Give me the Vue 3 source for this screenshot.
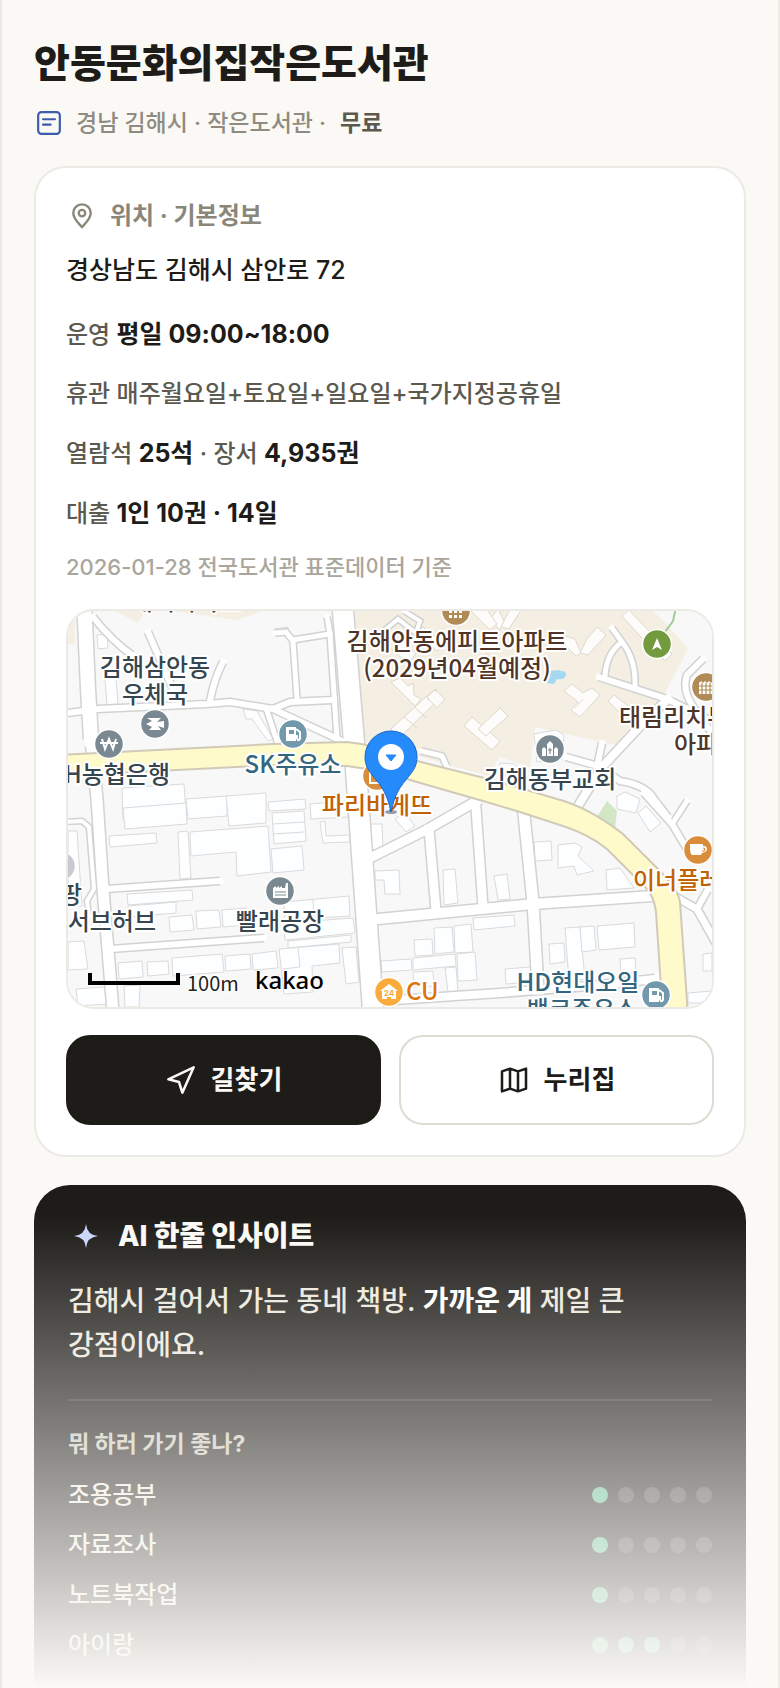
<script setup>
const details = [
  [{ t: '운영 ' }, { t: '평일 09:00~18:00', b: true }],
  [{ t: '휴관 매주월요일+토요일+일요일+국가지정공휴일' }],
  [{ t: '열람석 ' }, { t: '25석', b: true }, { t: ' · 장서 ' }, { t: '4,935권', b: true }],
  [{ t: '대출 ' }, { t: '1인 10권 · 14일', b: true }],
]

const scores = [
  { name: '조용공부', value: 1 },
  { name: '자료조사', value: 1 },
  { name: '노트북작업', value: 1 },
  { name: '아이랑', value: 3 },
]

const roads = [
  { w: 20, d: 'M342 600L354 743L359 813L373 1012' },
  { w: 14, d: 'M84 600L88 690L91 740' },
  { w: 11, d: 'M91 740L97 800L103 890L113 1012' },
  { w: 6, d: 'M60 715L97 710L207 705L230 703L273 710L290 703L334 701' },
  { w: 6, d: 'M273 710L342 742' },
  { w: 5, d: 'M267 712L278 745' },
  { w: 6, d: 'M93 618Q112 642 132 656' },
  { w: 6, d: 'M148 633L172 688' },
  { w: 6, d: 'M223 663Q214 680 210 702' },
  { w: 5, d: 'M275 634L286 633L293 642L297 700' },
  { w: 5, d: 'M293 641L330 635L327 618' },
  { w: 5, d: 'M330 635L337 740' },
  { w: 4, d: 'M60 823L82 822L89 828L94 890L87 902L89 916' },
  { w: 6, d: 'M106 890L220 882' },
  { w: 6, d: 'M110 950L264 939' },
  { w: 9, d: 'M368 860L428 830L480 800' },
  { w: 9, d: 'M429 830L436 912' },
  { w: 9, d: 'M475 795L483 908' },
  { w: 10, d: 'M368 921L440 914L533 905L652 897' },
  { w: 11, d: 'M523 806L533 903L538 990' },
  { w: 8, d: 'M380 1002L500 994L600 986L655 980' },
  { w: 7, d: 'M672 896L697 910L716 944' },
  { w: 6, d: 'M697 910L716 876' },
  { w: 6, d: 'M644 794L672 825L694 862' },
  { w: 5, d: 'M672 825L687 802' },
  { w: 8, d: 'M578 807L602 768L643 724L668 700' },
  { w: 6, d: 'M599 678L667 700L716 724' },
  { w: 5, d: 'M605 678Q606 654 622 643Q636 660 635 688' },
  { w: 5, d: 'M612 629L622 643' },
  { w: 6, d: 'M566 758L598 767L620 782Q646 786 654 800L668 818' },
  { w: 6, d: 'M602 744L597 768' },
  { w: 6, d: 'M703 660L687 676Q682 690 692 706L716 740' },
  { w: 5, d: 'M421 752L442 757L447 768' },
  { w: 4, d: 'M374 640L398 620L416 634L420 622L404 612' },
]

const blocks = [
  'M105 680l11-1 2 26-11 1z', 'M169 684l16-1 1 16-16 1z', 'M97 636l10-1 1 14-10 1z',
  'M274 630l14-2 0 5-14 2z', 'M243 710l14 2 16 28-5 2-16-22-6 0z',
  'M122 789l62-4 2 30-63 6z', 'M123 809l63-5 1 21-62 5z', 'M186 800l41-3 0 20-39 3z',
  'M226 797l40-3 0 30-37 3z', 'M109 837l47-3 1 10-47 4z', 'M178 833l10-1 3 47-11 1z',
  'M190 833l78-6 3 46-34 4-1-24-45 4z', 'M127 895l65-4 1 10-65 5z', 'M128 907l48-4 0 11-48 4z',
  'M169 918l23-2 2 15-24 2z', 'M196 912l23-1 2 17-24 2z', 'M222 911l24-2 2 17-25 2z',
  'M118 964l24-2 1 16-24 2z', 'M147 963l21-1 1 13-21 2z', 'M172 959l50-4 2 18-51 4z',
  'M225 957l25-2 1 15-25 2z', 'M252 955l24-3 2 17-25 2z', 'M76 990l30-2 2 17-30 2z',
  'M68 832l9 0 5 75-14 1z', 'M68 943l16-1 4 28-20 1z', 'M124 987l16-1-1 22-14 0z',
  'M272 814l32-2 2 30-32 3z', 'M273 825l31-2', 'M273 835l31-2', 'M271 850l31-3 2 24-31 3z',
  'M268 803l37-3 1 10-37 2z', 'M310 805l37-3 1 16-37 2z', 'M320 823l5-1 1 15 24-1 0 7-27 1z',
  'M284 903l65-6 1 20-65 4z', 'M313 901l1 20', 'M284 924l69-5 2 15-70 7z', 'M288 942l63-6 0 7-63 6z',
  'M279 950l60-5 1 19-28 3 1 26-29 2z', 'M342 949l14-1 3 35-13 2z', 'M298 948l2 20-17 2',
  'M370 825l12 0 1 25-6 2-6-2z', 'M375 872l24-1 1 24-15 0-1-14-9 0z', 'M395 820l10-6 10 13-9 6z',
  'M443 871l12-1 3 34-14 2z', 'M494 877l13-2 3 25-12 1z', 'M414 941l18-1 1 16-18 1z',
  'M434 929l18-1 2 25-19 2z', 'M454 927l17-2 2 28-18 1z', 'M381 962l30-2 1 11-30 2z',
  'M413 959l42-4 1 12-43 4z', 'M457 955l18-2 2 28-19 1z', 'M413 973l20-1 1 15-20 1z', 'M445 969l11-1 2 24-10 1z',
  'M473 919l27-2 14-1 1 11-41 4z', 'M534 843l17-1 1 19-17 1z', 'M558 846l17-2 7 4-4 9 16 15-17 4-3-9-16 2z',
  'M606 871l14-2 14 20-27 2z', 'M549 945l15-1 1 19-15 2z', 'M565 929l15-1 5 52-16 2z',
  'M580 928l14-1 2 24-14 2z', 'M597 927l37-3 1 24-36 3z', 'M620 960l15-1 1 15-15 1z',
  'M505 970l26-2 1 15-26 2z', 'M617 797l8-4 15 7-4 14-19-4z', 'M638 814l8-7 15 17-11 9z',
  'M688 994l24-2 0 12-24 0z', 'M703 955l9-1 0 18-9 0z', 'M534 735l22-4 8 5-2 24-25 3z', 'M500 764l14 1 9 6-1 8-22-5z',
]

const towers = [
  'M564 692l8-7 11 9 9-5 8 7-20 22-9-7 7-8z', 'M575 709l8-9',
  'M608 702l6-6 18 14-8 8z', 'M580 654l7-14 10-12 9 8-18 20z', 'M565 637l10 3 6 14-5 3-12-12z',
  'M622 617l7-6 15 16 28 28-7 7-25-25z', 'M490 620l8-10 6 12-4 9z', 'M501 628l8-16 14-4-14 22z',
  'M391 683l9-4 8 8 5-3 1 12 7 4-6 7z', 'M427 700l10-9 -1-1-9 7-36 33 8 9 38-37z',
  'M414 708l13 11', 'M404 718l13 11', 'M427 698l8-7 10 9-8 9z',
  'M464 727l8-9 28 24-8 9z', 'M478 730l22-21 8 8-22 20z',
  'M415 634l8-6 20 17-6 7z', 'M471 612l14-4 12 17-7 6z', 'M392 651l12-8 12 12-8 9z', 'M478 660l10-5 14 14-9 8z',
]

const labels = [
  { x: 186, y: 611, t: '태리아파트', c: 'brown', a: 'middle' },
  { x: 155, y: 677, t: '김해삼안동', c: 'slate', a: 'middle' },
  { x: 155, y: 704, t: '우체국', c: 'slate', a: 'middle' },
  { x: 170, y: 784, t: 'NH농협은행', c: 'slate', a: 'end' },
  { x: 293, y: 774, t: 'SK주유소', c: 'teal', a: 'middle' },
  { x: 377, y: 815, t: '파리바게뜨', c: 'orange', a: 'middle' },
  { x: 457, y: 651, t: '김해안동에피트아파트', c: 'brown', a: 'middle' },
  { x: 457, y: 678, t: '(2029년04월예정)', c: 'brown', a: 'middle' },
  { x: 619, y: 727, t: '태림리치뷰', c: 'brown', a: 'start' },
  { x: 674, y: 754, t: '아파트', c: 'brown', a: 'start' },
  { x: 550, y: 789, t: '김해동부교회', c: 'slate', a: 'middle' },
  { x: 633, y: 890, t: '이너플레이스', c: 'orange', a: 'start' },
  { x: 82, y: 904, t: '쿠팡', c: 'slate', a: 'end' },
  { x: 156, y: 931, t: '서브허브', c: 'slate', a: 'end' },
  { x: 280, y: 931, t: '빨래공장', c: 'slate', a: 'middle' },
  { x: 578, y: 992, t: 'HD현대오일', c: 'teal', a: 'middle' },
  { x: 582, y: 1019, t: '뱅크주유소', c: 'teal', a: 'middle' },
]

const pois = [
  { x: 61, y: 867, f: '#c9cacf' },
  { x: 155, y: 725, f: '#7a8991', d: 'M-8-6H6L2-2 9-3V4L3 2 6 6H-6L-3 3-9 0-3-3z' },
  { x: 109, y: 745, f: '#7a8991', s: 'M-7-5L-4 5 0-5 4 5 7-5M-9-1H9' },
  { x: 377, y: 777, f: '#d98c3a', s: 'M-7-3V7H7V-3C7-8-7-8-7-3z' },
  { x: 456, y: 612, f: '#b18b56', d: 'M-7-6h3v3h-3zM-2-6h3v3h-3zM3-6h3v3h-3zM-7-1h3v3h-3zM-2-1h3v3h-3zM3-1h3v3h-3zM-7 4h3v3h-3zM-2 4h3v3h-3zM3 4h3v3h-3z' },
  { x: 657, y: 645, f: '#739b3d', d: 'M0-6L5 6 0 3-5 6z' },
  { x: 706, y: 688, f: '#b18b56', d: 'M-7-4l2-2 2 2 2-2 2 2 2-2 2 2 2-2V7H-7z', s2: 'M-7-1H7M-7 3H7M-4-4V7M0-4V7M4-4V7' },
  { x: 550, y: 750, f: '#7a8991', d: 'M-8 7V0l2-2 2 2v7zM-3 7V-5L0-8 3-5V7zM4 7V0l2-2 2 2v7z', s2: 'M0-1V5M-2 1H2' },
  { x: 698, y: 851, f: '#d98c3a', d: 'M-8-6H5V-4C10-5 11 2 4 3L3 5H-6C-8 3-8 0-8-6z', s2: 'M5-2Q8-2 6 1H4' },
  { x: 280, y: 892, f: '#7a8991', d: 'M-7 7V-3l3-2v2l3-2v2l3-2v2h3l1-5H8V7z', s2: 'M-5 1H6M-5 4H6' },
]

const pumps = [{ x: 293, y: 735 }, { x: 656, y: 996 }]
</script>

<template>
  <main class="page">
    <header class="head">
      <h1>안동문화의집작은도서관</h1>
      <p class="meta">
        <svg class="meta-icon" viewBox="0 0 24 24" aria-hidden="true">
          <rect x="2" y="2" width="20" height="20" rx="3" />
          <path d="M6.500 8.500H17.500M6.500 13.500H13.500" />
        </svg>
        <span>경남 김해시 · 작은도서관 ·</span>
        <strong>무료</strong>
      </p>
    </header>

    <section class="card">
      <h2 class="card-title">
        <svg class="pin-icon" viewBox="0 0 24 24" aria-hidden="true">
          <path d="M12 21.500C9 18 4.500 14.500 4.500 9.500a7.500 7.500 0 0 1 15 0C19.500 14.500 15 18 12 21.500z" />
          <circle cx="12" cy="9.500" r="2.800" />
        </svg>
        위치 · 기본정보
      </h2>
      <p class="address">경상남도 김해시 삼안로 72</p>
      <p v-for="(row, i) in details" :key="i" class="detail">
        <component :is="part.b ? 'strong' : 'span'" v-for="(part, j) in row" :key="j">{{ part.t }}</component>
      </p>
      <p class="source">2026-01-28 전국도서관 표준데이터 기준</p>

      <div class="map">
        <svg viewBox="68 612 644 396" preserveAspectRatio="xMidYMid slice" role="img" aria-label="도서관 주변 지도">
          <rect x="0" y="560" width="800" height="500" fill="#f8f8f8" />
          <g fill="#f4eee3">
            <path d="M353 600H640L665 623 688 650 663 697 620 747 535 728 530 768 500 758 488 777 400 752 365 743z" />
            <path d="M60 600H75V645H60zM92 600H152L138 624zM172 612L237 621 262 612z" />
          </g>
          <path d="M546 684l4-12 9-1c3 2 6 0 7 4 0 5-6 6-9 5l-3 5z" fill="#a5d9f2" />
          <path d="M607 802l10 10-2 18-18-12z" fill="#d3e6c6" />
          <path d="M676 608L673 622 662 637" class="trail" />
          <g class="block"><path v-for="d in blocks" :key="d" :d="d" /></g>
          <g class="tower"><path v-for="d in towers" :key="d" :d="d" /></g>
          <g class="casing">
            <path v-for="r in roads" :key="r.d" :d="r.d" :stroke-width="r.w + 3" />
          </g>
          <g class="road">
            <path v-for="r in roads" :key="r.d" :d="r.d" :stroke-width="r.w" />
          </g>
          <path
            class="highway"
            d="M60 756L273 745 347 743Q380 746 417 762L500 783 557 800Q588 808 623 835L660 872Q678 890 680 903L688 1016H663L660 973 656 913Q654 898 647 890L607 850Q590 836 563 827L520 813 490 804 417 783Q380 771 347 767L273 766 60 777z"
          />
          <g class="labels">
            <text v-for="l in labels" :key="l.t" :x="l.x" :y="l.y" :class="l.c" :text-anchor="l.a">{{ l.t }}</text>
            <text x="406" y="1001" class="cu">CU</text>
          </g>
          <g v-for="p in pois" :key="p.x" :transform="`translate(${p.x} ${p.y})`">
            <circle r="14.500" :fill="p.f" class="ring" />
            <path v-if="p.d" :d="p.d" fill="#fff" />
            <path v-if="p.s" :d="p.s" fill="none" stroke="#fff" stroke-width="2" />
            <path v-if="p.s2" :d="p.s2" fill="none" :stroke="p.f" stroke-width="1.200" />
          </g>
          <g v-for="p in pumps" :key="p.x" :transform="`translate(${p.x} ${p.y})`">
            <circle r="14.500" fill="#7198ab" class="ring" />
            <path d="M-7-7H3V7H-7z" fill="#fff" />
            <path d="M-4-4H1V0H-4z" fill="#7198ab" />
            <path d="M3-5L7-2V5Q5 8 4 4V1" fill="none" stroke="#fff" stroke-width="2" />
          </g>
          <g transform="translate(389 993)">
            <circle r="14.500" fill="#fbab3b" class="ring" />
            <path d="M-9-1L0-8 9-1H7V7H-7V-1z" fill="#fff" />
            <text y="4" class="hours">24</text>
            <path d="M-2 7V5H2V7z" fill="#fbab3b" />
          </g>
          <path d="M90 974V984H178V974" fill="none" stroke="#000" stroke-width="4" />
          <text x="187" y="992" class="scale">100m</text>
          <text x="255" y="990" class="brand">kakao</text>
          <ellipse cx="391" cy="813" rx="6" ry="2" fill="#31425c" opacity="0.5" />
          <path
            d="M391 813C387 794 382 788 373 777C368 771 365 766 365 758a26 26 0 0 1 52 0C417 766 414 771 409 777C400 788 395 794 391 813z"
            fill="#258bfa"
            stroke="#1766cf"
            stroke-width="1"
          />
          <circle cx="391" cy="758" r="13" fill="#fff" />
          <path d="M386 756H396L391 762z" fill="#258bfa" stroke="#258bfa" stroke-width="1" />
        </svg>
      </div>

      <div class="actions">
        <button type="button" class="btn dark">
          <svg viewBox="0 0 24 24" aria-hidden="true"><path d="M2.500 11.500L21.500 2.500 13 21.500 10.500 13.500z" /></svg>
          길찾기
        </button>
        <a href="#" class="btn light">
          <svg viewBox="0 0 24 24" aria-hidden="true"><path d="M3 5.500L9 3.500 15 5.500 21 3.500V18.500L15 20.500 9 18.500 3 20.500zM9 3.500V18.500M15 5.500V20.500" /></svg>
          누리집
        </a>
      </div>
    </section>

    <section class="insight">
      <h2 class="insight-title">
        <svg viewBox="0 0 24 24" aria-hidden="true"><path d="M12 0Q13 11 24 12 13 13 12 24 11 13 0 12 11 11 12 0z" /></svg>
        AI 한줄 인사이트
      </h2>
      <p class="summary">김해시 걸어서 가는 동네 책방. <strong>가까운 게</strong> 제일 큰 강점이에요.</p>
      <h3>뭐 하러 가기 좋나?</h3>
      <ul class="scores">
        <li v-for="s in scores" :key="s.name">
          <span>{{ s.name }}</span>
          <span class="dots" role="img" :aria-label="`5점 중 ${s.value}점`">
            <i v-for="n in 5" :key="n" :class="{ on: n <= s.value }"></i>
          </span>
        </li>
      </ul>
    </section>
    <div class="fade"></div>
  </main>
</template>

<style>
body {
  background: #faf9f5;
}
</style>

<style scoped>
.page {
  position: relative;
  display: flex;
  flex-direction: column;
  box-sizing: border-box;
  min-height: 100vh;
  padding: 38px 32px 0;
  border: solid #eceae4;
  border-width: 0 2px;
  background: #faf9f5;
  color: #1e1c18;
  font-family: Inter, "Noto Sans CJK KR", sans-serif;
  font-weight: 500;
  word-break: keep-all;
}
h1, h2, h3, p, ul {
  margin: 0;
  padding: 0;
}
svg {
  display: block;
}
h1 {
  font-size: 39px;
  line-height: 50px;
  font-weight: 800;
}
.meta {
  display: flex;
  align-items: center;
  gap: 14px;
  margin-top: 18px;
  padding-left: 2px;
  font-size: 23px;
  line-height: 34px;
  color: #8f8b80;
}
.meta strong {
  color: #5c594f;
}
.meta-icon {
  width: 26px;
  height: 26px;
  fill: none;
  stroke: #3f5bab;
  stroke-width: 2;
  stroke-linecap: round;
}
.card {
  margin-top: 26px;
  padding: 30px;
  border: 2px solid #eceae4;
  border-radius: 32px;
  background: #fff;
}
.card-title {
  display: flex;
  align-items: center;
  gap: 14px;
  padding-left: 2px;
  font-size: 24px;
  line-height: 36px;
  font-weight: 700;
  color: #8a867a;
}
.pin-icon {
  width: 28px;
  height: 28px;
  fill: none;
  stroke: currentColor;
  stroke-width: 2;
}
.address {
  margin-top: 16px;
  font-size: 25px;
  line-height: 40px;
}
.detail {
  margin-top: 19px;
  font-size: 24px;
  line-height: 40px;
  color: #5c594f;
}
.address + .detail {
  margin-top: 24px;
}
.detail strong {
  font-size: 25px;
  font-weight: 700;
  color: #1e1c18;
}
.source {
  margin-top: 16px;
  font-size: 22px;
  line-height: 34px;
  color: #aaa69b;
}
.map {
  margin-top: 25px;
  border: 2px solid #eceae4;
  border-radius: 28px;
  overflow: hidden;
}
.map svg {
  width: 100%;
  font-family: "Noto Sans CJK KR", sans-serif;
}
.block path {
  fill: #fdfeff;
  stroke: #dadada;
}
.tower path {
  fill: #fdfcfa;
  stroke: #dfd8cc;
}
.casing path {
  fill: none;
  stroke: #d2d2d2;
}
.road path {
  fill: none;
  stroke: #fff;
  stroke-linecap: square;
}
.highway {
  fill: #fefaca;
  stroke: #d2cab8;
  stroke-width: 2;
}
.trail {
  fill: none;
  stroke: #a3cb95;
  stroke-width: 2;
}
.labels text {
  font-size: 24px;
  font-weight: 500;
  stroke: #fff;
  stroke-width: 4px;
  stroke-linejoin: round;
  paint-order: stroke;
}
.labels .cu {
  fill: #dd730c;
}
.slate { fill: #37464e; }
.brown { fill: #4e3527; }
.teal { fill: #33667e; }
.orange { fill: #c26100; }
.ring {
  stroke: #fff;
  stroke-width: 1.500px;
}
.hours {
  font: 700 8px Inter, sans-serif;
  fill: #fbab3b;
  text-anchor: middle;
}
.scale {
  font-size: 20px;
  font-weight: 400;
  fill: #222;
  stroke: #fff;
  stroke-width: 3px;
  paint-order: stroke;
}
.brand {
  font-family: "Noto Sans", sans-serif;
  font-size: 24px;
  font-weight: 500;
}
.actions {
  display: grid;
  grid-template-columns: 1fr 1fr;
  gap: 18px;
  margin-top: 26px;
}
.btn {
  display: flex;
  align-items: center;
  justify-content: center;
  gap: 14px;
  box-sizing: border-box;
  height: 90px;
  padding: 0;
  border: 2px solid #dedcd2;
  border-radius: 24px;
  font: inherit;
  font-size: 26px;
  line-height: 36px;
  font-weight: 700;
  text-decoration: none;
  color: #1e1c18;
  background: #fff;
}
.btn.dark {
  border-color: #1e1c18;
  background: #1e1c18;
  color: #faf9f5;
}
.btn svg {
  width: 32px;
  height: 32px;
  fill: none;
  stroke: currentColor;
  stroke-width: 1.900;
  stroke-linejoin: round;
}
.insight {
  flex: 1;
  margin-top: 28px;
  padding: 30px 34px 0;
  border-radius: 36px 36px 0 0;
  background: #1e1c18;
  color: #f2efe6;
}
.insight-title {
  display: flex;
  align-items: center;
  gap: 20px;
  padding-left: 6px;
  font-size: 28px;
  line-height: 42px;
  font-weight: 800;
  color: #faf9f5;
}
.insight-title svg {
  width: 24px;
  height: 24px;
  fill: #c9d6fa;
}
.summary {
  margin-top: 22px;
  padding-bottom: 32px;
  border-bottom: 2px solid rgba(255, 255, 255, 0.1);
  font-size: 28px;
  line-height: 44px;
  color: #ebe8df;
}
.summary strong {
  color: #fff;
}
h3 {
  margin-top: 26px;
  font-size: 23px;
  line-height: 34px;
  font-weight: 700;
  color: #cbc7bb;
}
.scores {
  margin-top: 9px;
  list-style: none;
}
.scores li {
  display: flex;
  align-items: center;
  justify-content: space-between;
  font-size: 24px;
  line-height: 50px;
}
.dots {
  display: flex;
  gap: 10px;
}
.dots i {
  width: 16px;
  height: 16px;
  border-radius: 50%;
  background: rgba(255, 255, 255, 0.17);
}
.dots .on {
  background: #5abb90;
}
.fade {
  position: absolute;
  left: 0;
  right: 0;
  bottom: 0;
  height: 472px;
  background: linear-gradient(rgba(250, 249, 245, 0), #faf9f5);
  pointer-events: none;
}
</style>
